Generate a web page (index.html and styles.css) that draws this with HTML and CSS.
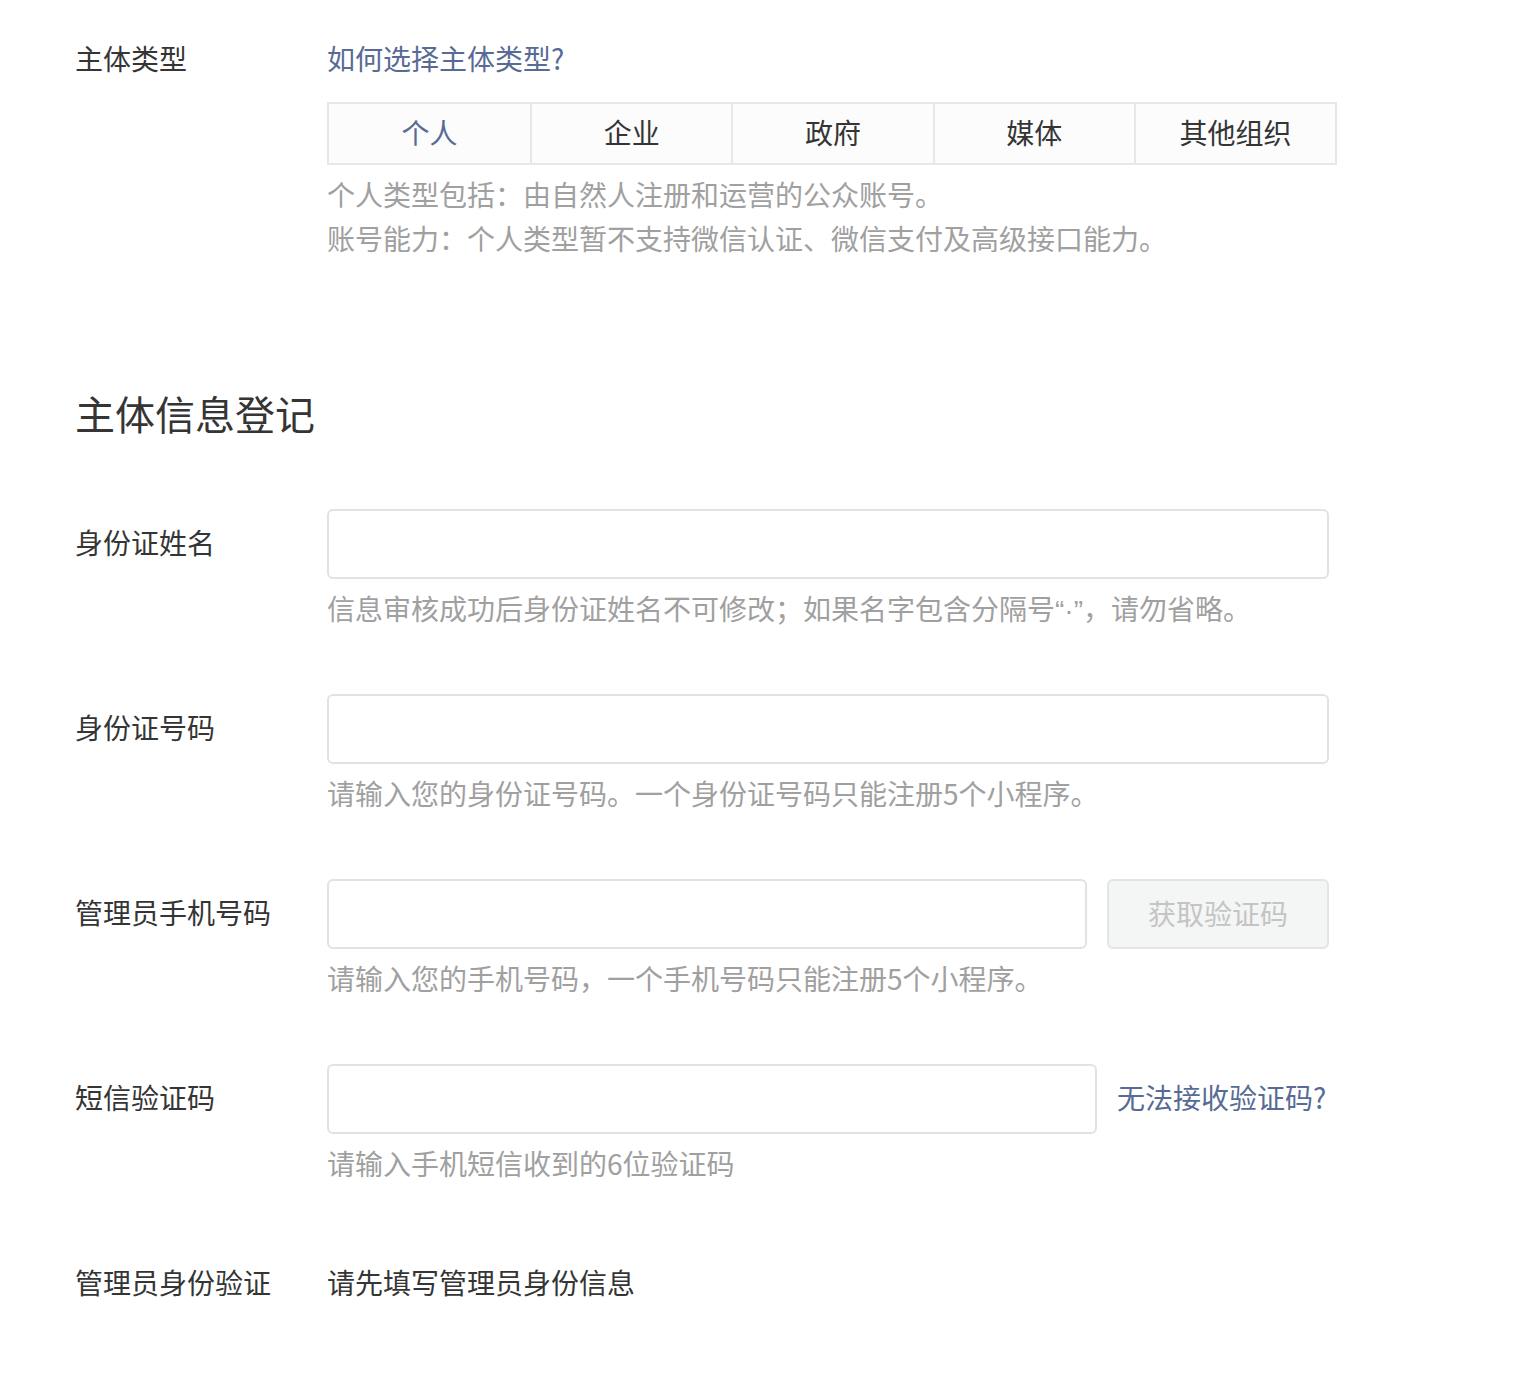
FILE: index.html
```html
<!DOCTYPE html>
<html lang="zh-CN">
<head>
<meta charset="utf-8">
<title>主体信息登记</title>
<link rel="stylesheet" href="styles.css">
</head>
<body>
<div class="page">
  <div class="type-row">
    <div class="label">主体类型</div>
    <div class="type-content">
      <a class="link" href="#">如何选择主体类型?</a>
      <div class="segments">
        <div class="seg active">个人</div>
        <div class="seg">企业</div>
        <div class="seg">政府</div>
        <div class="seg">媒体</div>
        <div class="seg">其他组织</div>
      </div>
      <div class="desc">个人类型包括：由自然人注册和运营的公众账号。</div>
      <div class="desc">账号能力：个人类型暂不支持微信认证、微信支付及高级接口能力。</div>
    </div>
  </div>

  <h2 class="heading">主体信息登记</h2>

  <div class="form">
    <div class="row">
      <div class="label field-label">身份证姓名</div>
      <div class="field">
        <div class="line"><input class="input" type="text"></div>
        <div class="desc">信息审核成功后身份证姓名不可修改；如果名字包含分隔号<span class="latin">“·”</span>，请勿省略。</div>
      </div>
    </div>
    <div class="row">
      <div class="label field-label">身份证号码</div>
      <div class="field">
        <div class="line"><input class="input" type="text"></div>
        <div class="desc">请输入您的身份证号码。一个身份证号码只能注册5个小程序。</div>
      </div>
    </div>
    <div class="row">
      <div class="label field-label">管理员手机号码</div>
      <div class="field">
        <div class="line">
          <input class="input input-phone" type="text">
          <button class="btn-disabled" type="button">获取验证码</button>
        </div>
        <div class="desc">请输入您的手机号码，一个手机号码只能注册5个小程序。</div>
      </div>
    </div>
    <div class="row">
      <div class="label field-label">短信验证码</div>
      <div class="field">
        <div class="line">
          <input class="input input-code" type="text">
          <a class="link code-link" href="#">无法接收验证码?</a>
        </div>
        <div class="desc">请输入手机短信收到的6位验证码</div>
      </div>
    </div>
    <div class="row">
      <div class="label field-label">管理员身份验证</div>
      <div class="field">
        <div class="value">请先填写管理员身份信息</div>
      </div>
    </div>
  </div>
</div>
</body>
</html>
```

FILE: styles.css
```css
* { box-sizing: border-box; }

html, body {
  margin: 0;
  padding: 0;
  background: #ffffff;
}

body {
  font-family: "Noto Sans CJK SC", "Noto Sans", sans-serif;
  font-size: 28px;
  color: #353535;
}

.page {
  padding: 38px 0 60px 75px;
}

.type-row {
  display: flex;
}

.label {
  width: 252px;
  flex: none;
  line-height: 40px;
  padding-bottom: 4px;
  color: #353535;
}

.type-content {
  width: 1010px;
}

.link {
  color: #576b95;
  text-decoration: none;
  line-height: 40px;
  padding-bottom: 4px;
  display: inline-block;
}

.segments {
  margin-top: 20px;
  display: grid;
  grid-template-columns: repeat(5, 1fr);
  border: 2px solid #e7e7e7;
  background: #fcfcfc;
  height: 63px;
}

.seg {
  display: flex;
  align-items: center;
  justify-content: center;
  color: #353535;
  border-left: 2px solid #e7e7e7;
  padding-bottom: 3px;
}

.seg:first-child { border-left: none; }

.seg.active { color: #576b95; }

.segments + .desc { margin-top: 9px; }

.desc {
  line-height: 40px;
  padding-bottom: 4px;
  color: #a0a0a0;
}

.latin {
  font-family: "Liberation Sans", sans-serif;
  line-height: 1;
}

.heading {
  margin: 125px 0 0 0;
  font-size: 40px;
  font-weight: normal;
  line-height: 52px;
  padding-bottom: 4px;
  color: #353535;
}

.form {
  margin-top: 66px;
  display: flex;
  flex-direction: column;
  gap: 62px;
}

.row {
  display: flex;
}

.field-label {
  line-height: 66px;
  padding-bottom: 4px;
}

.field {
  width: 1002px;
}

.line {
  display: flex;
  align-items: center;
  gap: 20px;
}

.line + .desc { margin-top: 9px; }

.input {
  display: block;
  width: 100%;
  height: 70px;
  border: 2px solid #e2e2e2;
  border-radius: 6px;
  background: #fff;
  outline: none;
  font: inherit;
  padding: 0 20px;
}

.input-phone { width: 760px; flex: none; }
.input-code { width: 770px; flex: none; }

.btn-disabled {
  flex: 1;
  height: 70px;
  border: 2px solid #e3e5e5;
  border-radius: 6px;
  background: #f4f5f5;
  color: #c4c4c4;
  font: inherit;
  padding: 0 0 3px 0;
}

.code-link {
  white-space: nowrap;
  padding-bottom: 4px;
}

.value {
  line-height: 66px;
  padding-bottom: 4px;
  color: #353535;
}
```
